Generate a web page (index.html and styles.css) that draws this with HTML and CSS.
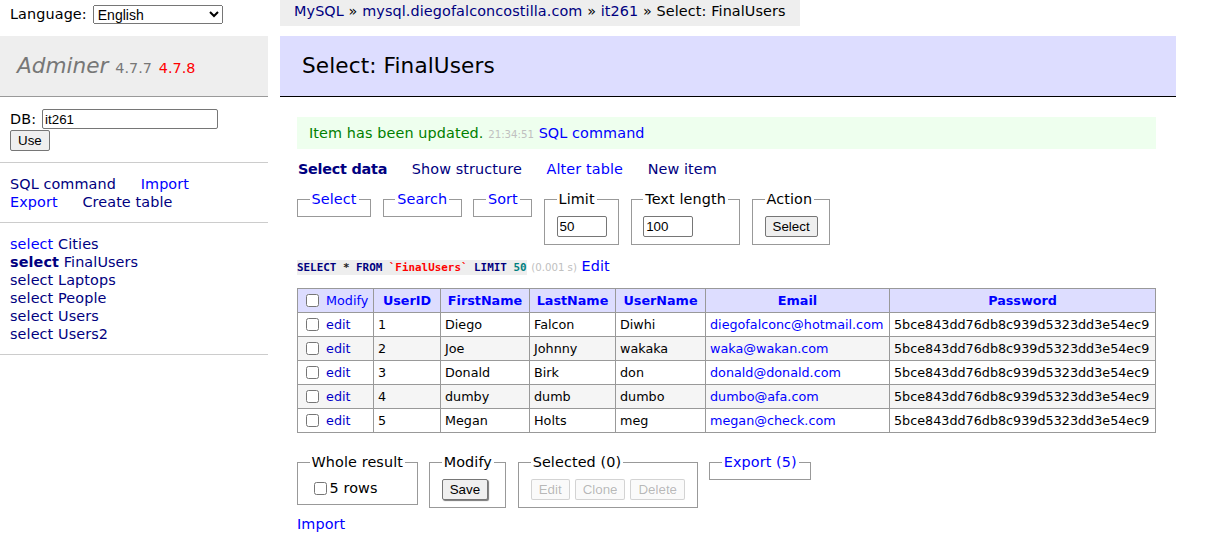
FILE: index.html
```html
<!DOCTYPE html>
<html lang="en">
<head>
<meta charset="utf-8">
<title>Select: FinalUsers - Adminer</title>
<link rel="stylesheet" href="styles.css">
</head>
<body>
<div class="page">
  <aside class="menu">
    <div class="lang">
      <span>Language:</span>
      <select class="langsel"><option>English</option></select>
    </div>
    <h1 class="brand"><a class="brand-name">Adminer</a> <span class="ver">4.7.7</span> <span class="ver-new">4.7.8</span></h1>
    <div class="dbs">
      <div class="dbrow"><span>DB:</span><input class="txt dbinput" type="text" value="it261"></div>
      <div><button class="btn">Use</button></div>
    </div>
    <div class="menu-links">
      <div><a class="nv lk">SQL command</a> <a class="lk">Import</a></div>
      <div><a class="lk">Export</a> <a class="nv lk">Create table</a></div>
    </div>
    <ul class="tables">
      <li><a>select</a> <a class="nv">Cities</a></li>
      <li><a class="nv active">select</a> <a class="nv">FinalUsers</a></li>
      <li><a class="nv">select</a> <a class="nv">Laptops</a></li>
      <li><a class="nv">select</a> <a class="nv">People</a></li>
      <li><a class="nv">select</a> <a class="nv">Users</a></li>
      <li><a class="nv">select</a> <a class="nv">Users2</a></li>
    </ul>
  </aside>
  <main class="content">
    <div class="breadcrumb"><a class="nv">MySQL</a> » <a class="nv">mysql.diegofalconcostilla.com</a> » <a class="nv">it261</a> » Select: FinalUsers</div>
    <h2 class="title">Select: FinalUsers</h2>
    <div class="inner">
      <div class="message">Item has been updated. <span class="time">21:34:51</span> <a>SQL command</a></div>
      <p class="links"><a class="nv active lk">Select data</a> <a class="nv lk">Show structure</a> <a class="lk">Alter table</a> <a class="nv lk">New item</a></p>
      <div class="filters">
        <fieldset class="fs"><legend><a>Select</a></legend></fieldset>
        <fieldset class="fs"><legend><a>Search</a></legend></fieldset>
        <fieldset class="fs"><legend><a>Sort</a></legend></fieldset>
        <fieldset class="fs"><legend>Limit</legend><input class="txt small" type="text" value="50"></fieldset>
        <fieldset class="fs"><legend>Text length</legend><input class="txt small" type="text" value="100"></fieldset>
        <fieldset class="fs"><legend>Action</legend><button class="btn">Select</button></fieldset>
      </div>
      <p class="sqlline"><code class="sql"><span class="kw">SELECT</span> * <span class="kw">FROM</span> <span class="bac">`FinalUsers`</span> <span class="kw">LIMIT</span> <span class="num">50</span></code> <span class="time">(0.001 s)</span> <a>Edit</a></p>
      <table class="data">
        <colgroup>
          <col class="c1"><col class="c2"><col class="c3"><col class="c4"><col class="c5"><col class="c6"><col class="c7">
        </colgroup>
        <thead>
          <tr>
            <td class="hfirst"><input type="checkbox" class="cb"> <a>Modify</a></td>
            <th><a>UserID</a></th>
            <th><a>FirstName</a></th>
            <th><a>LastName</a></th>
            <th><a>UserName</a></th>
            <th><a>Email</a></th>
            <th><a>Password</a></th>
          </tr>
        </thead>
        <tbody>
          <tr>
            <td><input type="checkbox" class="cb"> <a class="ed">edit</a></td>
            <td>1</td><td>Diego</td><td>Falcon</td><td>Diwhi</td>
            <td><a>diegofalconc@hotmail.com</a></td><td>5bce843dd76db8c939d5323dd3e54ec9</td>
          </tr>
          <tr>
            <td><input type="checkbox" class="cb"> <a class="ed">edit</a></td>
            <td>2</td><td>Joe</td><td>Johnny</td><td>wakaka</td>
            <td><a>waka@wakan.com</a></td><td>5bce843dd76db8c939d5323dd3e54ec9</td>
          </tr>
          <tr>
            <td><input type="checkbox" class="cb"> <a class="ed">edit</a></td>
            <td>3</td><td>Donald</td><td>Birk</td><td>don</td>
            <td><a>donald@donald.com</a></td><td>5bce843dd76db8c939d5323dd3e54ec9</td>
          </tr>
          <tr>
            <td><input type="checkbox" class="cb"> <a class="ed">edit</a></td>
            <td>4</td><td>dumby</td><td>dumb</td><td>dumbo</td>
            <td><a>dumbo@afa.com</a></td><td>5bce843dd76db8c939d5323dd3e54ec9</td>
          </tr>
          <tr>
            <td><input type="checkbox" class="cb"> <a class="ed">edit</a></td>
            <td>5</td><td>Megan</td><td>Holts</td><td>meg</td>
            <td><a>megan@check.com</a></td><td>5bce843dd76db8c939d5323dd3e54ec9</td>
          </tr>
        </tbody>
      </table>
      <div class="footer">
        <div class="actions">
          <fieldset class="fs fs-bottom"><legend>Whole result</legend><label class="all"><input type="checkbox" class="cb2">5 rows</label></fieldset>
          <fieldset class="fs fs-bottom"><legend>Modify</legend><button class="btn default">Save</button></fieldset>
          <fieldset class="fs fs-bottom"><legend>Selected (0)</legend><span class="btns"><button class="btn" disabled>Edit</button><button class="btn" disabled>Clone</button><button class="btn" disabled>Delete</button></span></fieldset>
          <fieldset class="fs fs-bottom"><legend><a>Export (5)</a></legend></fieldset>
        </div>
      </div>
      <p class="import"><a>Import</a></p>
    </div>
  </main>
</div>
</body>
</html>
```

FILE: styles.css
```css
html, body {
  margin: 0;
  padding: 0;
}
body {
  font: 14.4px/18px "DejaVu Sans", Verdana, sans-serif;
  letter-spacing: 0.1px;
  color: #000;
  background: #fff;
}
a {
  color: #00f;
  text-decoration: none;
}
a.nv {
  color: #000080;
}
.active {
  font-weight: bold;
}
.lk {
  margin-right: 20px;
  white-space: nowrap;
}

.page {
  display: flex;
  align-items: flex-start;
}

/* sidebar */
.menu {
  width: 268px;
  flex: none;
}
.lang {
  height: 36px;
  padding: 5px 10px 0;
  box-sizing: border-box;
  display: flex;
  align-items: flex-start;
}
.lang > span {
  line-height: 19px;
}
.langsel {
  margin-left: 6px;
  width: 130px;
  height: 19px;
  font: 14px "Liberation Sans", Arial, sans-serif;
  letter-spacing: 0;
  padding: 0;
}
.brand {
  margin: 0;
  height: 61px;
  box-sizing: border-box;
  background: #eee;
  border-bottom: 1px solid #999;
  padding: 0 17px;
  font-size: 21.6px;
  line-height: 60px;
  font-weight: normal;
  color: #777;
  white-space: nowrap;
  letter-spacing: 0;
}
.brand-name {
  color: #777;
  font-style: italic;
}
.ver {
  font-size: 14.4px;
  color: #777;
}
.ver-new {
  font-size: 14.4px;
  color: red;
}
.dbs {
  padding: 12px 10px 11px;
  border-bottom: 1px solid #ccc;
}
.dbrow {
  display: flex;
  align-items: center;
  height: 20px;
  margin-bottom: 1px;
}
.dbinput {
  margin-left: 6px;
  width: 176px;
  height: 20px;
}
.menu-links {
  padding: 12px 10px 11px;
  border-bottom: 1px solid #ccc;
  white-space: nowrap;
}
.tables {
  list-style: none;
  margin: 0;
  padding: 12px 10px 11px;
  border-bottom: 1px solid #ccc;
  white-space: nowrap;
}

/* form controls */
.txt {
  box-sizing: border-box;
  font: 13.33px "Liberation Sans", Arial, sans-serif;
  letter-spacing: 0;
  border: 1px solid #767676;
  border-radius: 2px;
  padding: 1px 2px;
  background: #fff;
  color: #000;
  vertical-align: middle;
}
.small {
  width: 50px;
  height: 21px;
}
.btn {
  box-sizing: border-box;
  font: 13.33px "Liberation Sans", Arial, sans-serif;
  letter-spacing: 0;
  height: 21px;
  padding: 1px 7px;
  margin: 0;
  border: 1px solid #767676;
  border-radius: 2px;
  background: #efefef;
  color: #000;
  vertical-align: middle;
}
.btn.default {
  box-shadow: 1px 1px 1px #777;
}
.btn:disabled {
  color: rgba(16, 16, 16, 0.3);
  border-color: rgba(118, 118, 118, 0.3);
  background: rgba(239, 239, 239, 0.3);
}

/* content */
.content {
  margin-left: 12px;
  width: 896px;
  flex: none;
}
.breadcrumb {
  width: max-content;
  height: 26px;
  line-height: 22px;
  background: #eee;
  padding: 0 14px;
  white-space: nowrap;
}
.title {
  margin: 10px 0 0;
  height: 61px;
  box-sizing: border-box;
  background: #ddf;
  border-bottom: 1px solid #000;
  padding: 0 22px;
  font-size: 21.6px;
  line-height: 60px;
  font-weight: normal;
  color: #000;
}
.inner {
  padding: 0 20px 0 17px;
}
.message {
  margin-top: 20px;
  height: 32px;
  line-height: 32px;
  padding: 0 12px;
  background: #efe;
  color: green;
  white-space: nowrap;
}
.time {
  color: silver;
  font-size: 10.2px;
  letter-spacing: 0;
}
.links {
  margin: 11px 0 0;
  padding-left: 1px;
  line-height: 18px;
}
.links .active {
  letter-spacing: -0.25px;
}
.fs {
  display: inline-block;
  vertical-align: top;
  margin: 11px 7px 0 0;
  padding: 0 11.5px 7px;
  border: 1px solid #999;
  min-width: 0;
}
.fs legend {
  padding: 0 2px;
  line-height: 20px;
}
.fs > .txt, .fs > .btn {
  margin-top: 7px;
}
.sqlline {
  margin: 12px 0 0;
  height: 18px;
  line-height: 18px;
  white-space: nowrap;
}
.sql {
  font: bold 10.9px "DejaVu Sans Mono", monospace;
  letter-spacing: 0;
  background: #eee;
  color: #222;
  padding: 1px 0;
}
.kw {
  color: #000080;
}
.bac {
  color: red;
}
.num {
  color: #007f7f;
}

/* table */
.data {
  margin-top: 13px;
  border-collapse: collapse;
  table-layout: fixed;
  width: 858px;
  font-size: 12.75px;
  letter-spacing: 0;
  white-space: nowrap;
}
.c1 { width: 76px; }
.c2 { width: 67px; }
.c3 { width: 89px; }
.c4 { width: 86px; }
.c5 { width: 90px; }
.c6 { width: 184px; }
.c7 { width: 266px; }
.data td, .data th {
  border: 1px solid #999;
  padding: 3px 4px;
  line-height: 17px;
  overflow: hidden;
}
.data th {
  background: #ddf;
  text-align: center;
  font-weight: bold;
}
.data thead td {
  background: #ddf;
}
.data tbody tr:nth-child(2n) td {
  background: #f5f5f5;
}
.cb {
  width: 13px;
  height: 13px;
  margin: 0 3px 0 4px;
  vertical-align: -2px;
}
.ed {
  color: #0000c8;
}

/* footer */
.footer {
  padding: 19px 0 7px;
}
.fs-bottom {
  margin-top: 0;
}
.all {
  display: inline-block;
  margin-top: 7px;
  line-height: 18px;
}
.cb2 {
  width: 13px;
  height: 13px;
  margin: 0 3px 0 4px;
  vertical-align: -2px;
}
.btns {
  display: inline-flex;
  gap: 5px;
  margin-top: 7px;
}
.import {
  margin: 0;
  line-height: 18px;
}
```
